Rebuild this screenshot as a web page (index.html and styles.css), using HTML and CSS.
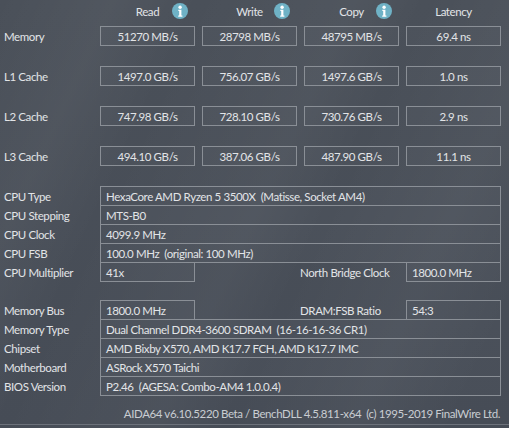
FILE: index.html
```html
<!DOCTYPE html>
<html>
<head>
<meta charset="utf-8">
<link rel="stylesheet" href="styles.css">
</head>
<body>
<div class="page">
  <div class="heads">
    <div></div>
    <div class="head"><span class="htxt">Read</span><svg class="info" viewBox="0 0 16 16"><circle cx="8" cy="8" r="8" fill="#6fb2c6"/><circle cx="8.1" cy="4.3" r="1.7" fill="#fff"/><path d="M6.3 6.8h3.1v5.6h1v1.3H6.2v-1.3h1v-4.3h-0.9z" fill="#fff"/></svg></div>
    <div class="head"><span class="htxt">Write</span><svg class="info" viewBox="0 0 16 16"><circle cx="8" cy="8" r="8" fill="#6fb2c6"/><circle cx="8.1" cy="4.3" r="1.7" fill="#fff"/><path d="M6.3 6.8h3.1v5.6h1v1.3H6.2v-1.3h1v-4.3h-0.9z" fill="#fff"/></svg></div>
    <div class="head"><span class="htxt">Copy</span><svg class="info" viewBox="0 0 16 16"><circle cx="8" cy="8" r="8" fill="#6fb2c6"/><circle cx="8.1" cy="4.3" r="1.7" fill="#fff"/><path d="M6.3 6.8h3.1v5.6h1v1.3H6.2v-1.3h1v-4.3h-0.9z" fill="#fff"/></svg></div>
    <div class="head"><span class="htxt">Latency</span></div>
  </div>
  <div class="bench">
    <div class="lbl">Memory</div>
    <div class="val">51270 MB/s</div>
    <div class="val">28798 MB/s</div>
    <div class="val">48795 MB/s</div>
    <div class="val">69.4 ns</div>

    <div class="lbl">L1 Cache</div>
    <div class="val">1497.0 GB/s</div>
    <div class="val">756.07 GB/s</div>
    <div class="val">1497.6 GB/s</div>
    <div class="val">1.0 ns</div>

    <div class="lbl">L2 Cache</div>
    <div class="val">747.98 GB/s</div>
    <div class="val">728.10 GB/s</div>
    <div class="val">730.76 GB/s</div>
    <div class="val">2.9 ns</div>

    <div class="lbl">L3 Cache</div>
    <div class="val">494.10 GB/s</div>
    <div class="val">387.06 GB/s</div>
    <div class="val">487.90 GB/s</div>
    <div class="val">11.1 ns</div>
  </div>

  <div class="info-block first">
    <div class="row"><div class="lbl">CPU Type</div><div class="cell wide">HexaCore AMD Ryzen 5 3500X&nbsp; (Matisse, Socket AM4)</div></div>
    <div class="row"><div class="lbl">CPU Stepping</div><div class="cell wide">MTS-B0</div></div>
    <div class="row"><div class="lbl">CPU Clock</div><div class="cell wide">4099.9 MHz</div></div>
    <div class="row"><div class="lbl">CPU FSB</div><div class="cell wide">100.0 MHz&nbsp; (original: 100 MHz)</div></div>
    <div class="row split"><div class="lbl">CPU Multiplier</div><div class="cell">41x</div><div class="lbl2">North Bridge Clock</div><div class="cell">1800.0 MHz</div></div>
  </div>

  <div class="info-block second">
    <div class="row split"><div class="lbl">Memory Bus</div><div class="cell">1800.0 MHz</div><div class="lbl2">DRAM:FSB Ratio</div><div class="cell">54:3</div></div>
    <div class="row"><div class="lbl">Memory Type</div><div class="cell wide">Dual Channel DDR4-3600 SDRAM&nbsp; (16-16-16-36 CR1)</div></div>
    <div class="row"><div class="lbl">Chipset</div><div class="cell wide">AMD Bixby X570, AMD K17.7 FCH, AMD K17.7 IMC</div></div>
    <div class="row"><div class="lbl">Motherboard</div><div class="cell wide">ASRock X570 Taichi</div></div>
    <div class="row"><div class="lbl">BIOS Version</div><div class="cell wide">P2.46&nbsp; (AGESA: Combo-AM4 1.0.0.4)</div></div>
  </div>

  <div class="footer">AIDA64 v6.10.5220 Beta / BenchDLL 4.5.811-x64&nbsp; (c) 1995-2019 FinalWire Ltd.</div>
</div>
</body>
</html>
```
FILE: styles.css
```css
html, body {
  margin: 0;
  padding: 0;
}
body {
  width: 509px;
  height: 428px;
  overflow: hidden;
  font-family: Lato, "Noto Sans", sans-serif;
  font-size: 11.5px;
  letter-spacing: -0.4px;
  color: #e2e4e7;
  background:
    linear-gradient(115deg, rgba(255,255,255,0) 0%, rgba(255,255,255,0.04) 16%, rgba(255,255,255,0) 28%, rgba(255,255,255,0.035) 50%, rgba(255,255,255,0) 60%, rgba(255,255,255,0.035) 78%, rgba(255,255,255,0) 92%),
    linear-gradient(180deg, #4a5059 0%, #464c56 100%);
}
.page {
  width: 509px;
  height: 428px;
  display: flex;
  flex-direction: column;
}
.heads {
  display: grid;
  grid-template-columns: 93px repeat(4, 95px);
  column-gap: 7px;
  height: 22px;
  margin-bottom: 4px;
}
.head {
  display: grid;
  grid-template-columns: 1fr auto 1fr;
  align-items: center;
}
.htxt {
  grid-column: 2;
}
.info {
  grid-column: 3;
  justify-self: end;
  width: 16px;
  height: 16px;
  margin-right: 7px;
}
.bench {
  display: grid;
  grid-template-columns: 93px repeat(4, 95px);
  column-gap: 7px;
  row-gap: 20px;
  grid-auto-rows: 20px;
}
.lbl {
  padding-left: 4px;
  display: flex;
  align-items: center;
  white-space: nowrap;
}
.val {
  box-sizing: border-box;
  border: 1px solid #8a8f96;
  background: rgba(255,255,255,0.02);
  display: flex;
  align-items: center;
  justify-content: center;
}
.info-block.first {
  margin-top: 20px;
}
.info-block.second {
  margin-top: 18px;
}
.row {
  display: grid;
  grid-template-columns: 100px 401px;
  height: 20px;
  margin-top: -1px;
}
.row:first-child {
  margin-top: 0;
}
.row.split {
  grid-template-columns: 100px 95px 211px 95px;
}
.cell {
  box-sizing: border-box;
  border: 1px solid #8a8f96;
  background: rgba(255,255,255,0.02);
  padding-left: 5px;
  display: flex;
  align-items: center;
  white-space: nowrap;
}
.lbl2 {
  padding-left: 105px;
  display: flex;
  align-items: center;
  white-space: nowrap;
}
.footer {
  margin-top: 6px;
  height: 22px;
  padding-right: 9px;
  display: flex;
  align-items: center;
  justify-content: flex-end;
  color: #c9cdd2;
  border-bottom: 1px solid #6c717a;
}
```
